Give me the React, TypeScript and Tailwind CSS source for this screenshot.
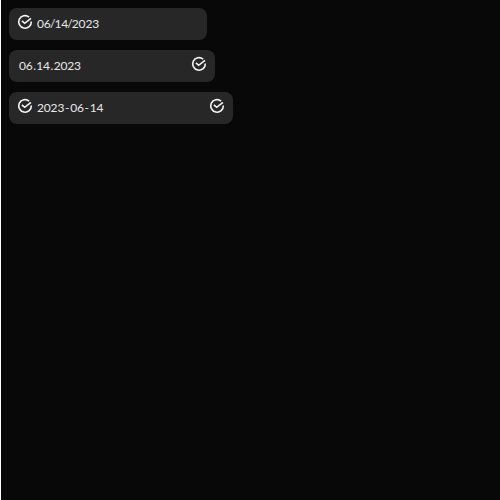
function CheckIcon() {
  return (
    <svg className="mb-1 size-4 shrink-0" viewBox="0 0 16 16" fill="none" stroke="#f4f4f4" strokeWidth="1.6">
      <path d="M12.1 3.1A6.3 6.3 0 1 0 14.3 7.5" />
      <path d="M4.9 6.8L7.7 9.3L14 4.4" />
    </svg>
  );
}

interface FieldProps {
  parts: string[];
  separator: string;
  gap: string;
  width: string;
  leading?: boolean;
  trailing?: boolean;
}

function DateField({ parts, separator, gap, width, leading, trailing }: FieldProps) {
  return (
    <div className={`flex h-8 items-center rounded-lg bg-[#272727] pr-2 ${leading ? "pl-2" : "pl-2.5"} ${width}`}>
      {leading && <CheckIcon />}
      <span className={`flex-1 whitespace-nowrap font-[Lato,sans-serif] text-[12px] leading-4 tracking-[-0.15px] text-[#e8e8e8] ${leading ? "ml-1" : ""}`}>
        {parts.map((part, i) => (
          <span key={i}>
            {i > 0 && <span className={gap}>{separator}</span>}
            {part}
          </span>
        ))}
      </span>
      {trailing && <CheckIcon />}
    </div>
  );
}

export default function App() {
  return (
    <main className="flex h-screen w-full flex-col items-start gap-2.5 border-l border-white bg-[#080808] p-2">
      <DateField parts={["06", "14", "2023"]} separator="/" gap="-mx-[0.75px]" width="w-[198px]" leading />
      <DateField parts={["06", "14", "2023"]} separator="." gap="mx-[0.5px]" width="w-[206px]" trailing />
      <DateField parts={["2023", "06", "14"]} separator="-" gap="mx-[0.8px]" width="w-[224px]" leading trailing />
    </main>
  );
}
